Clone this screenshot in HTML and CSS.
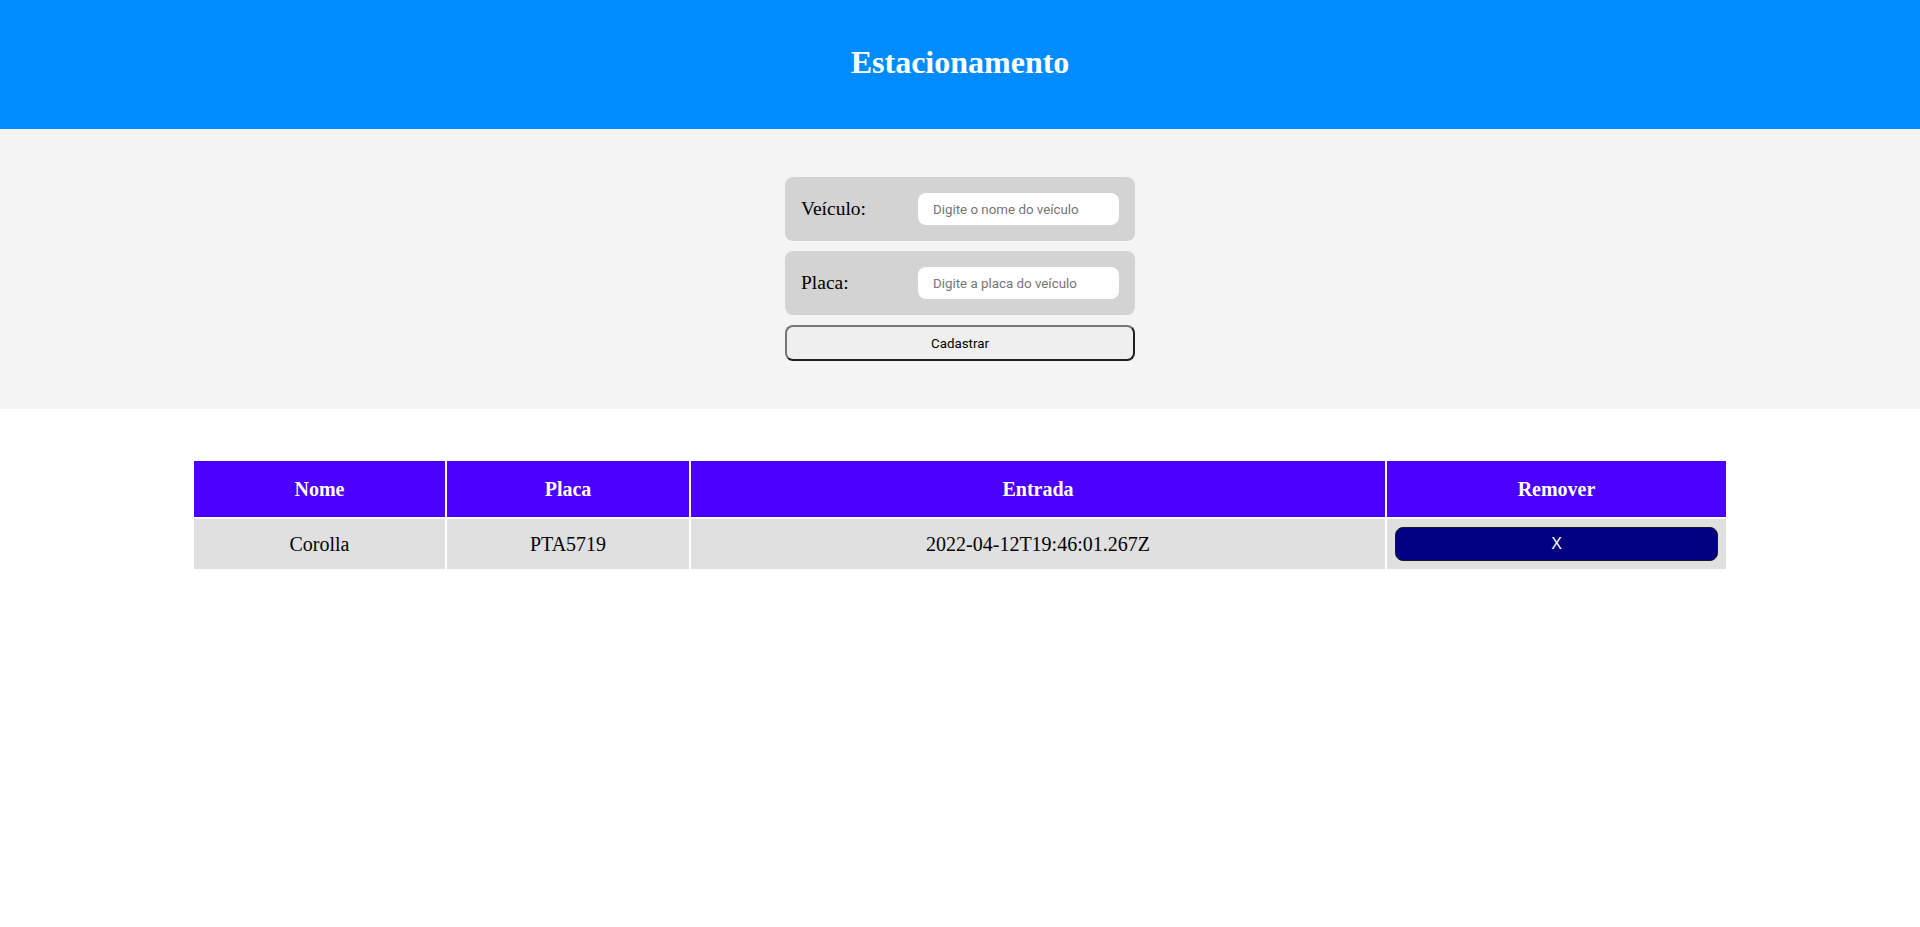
FILE: index.html
```html
<!DOCTYPE html>
<html lang="pt-BR">
<head>
<meta charset="utf-8">
<title>Estacionamento</title>
<link rel="stylesheet" href="styles.css">
</head>
<body>
<header class="topbar">
  <h1 class="title">Estacionamento</h1>
</header>
<section class="form-area">
  <form class="form">
    <div class="field">
      <label class="field-label" for="veiculo">Veículo:</label>
      <input class="field-input" id="veiculo" type="text" placeholder="Digite o nome do veículo">
    </div>
    <div class="field">
      <label class="field-label" for="placa">Placa:</label>
      <input class="field-input" id="placa" type="text" placeholder="Digite a placa do veículo">
    </div>
    <button class="submit" type="button">Cadastrar</button>
  </form>
</section>
<table class="garage">
  <colgroup>
    <col class="c-nome">
    <col class="c-placa">
    <col class="c-entrada">
    <col class="c-remover">
  </colgroup>
  <thead>
    <tr>
      <th>Nome</th>
      <th>Placa</th>
      <th>Entrada</th>
      <th>Remover</th>
    </tr>
  </thead>
  <tbody>
    <tr>
      <td>Corolla</td>
      <td>PTA5719</td>
      <td>2022-04-12T19:46:01.267Z</td>
      <td><button class="remove" type="button">X</button></td>
    </tr>
  </tbody>
</table>
</body>
</html>
```
FILE: styles.css
```css
html, body {
  margin: 0;
  padding: 0;
  background: #ffffff;
  font-family: "Liberation Serif", "Times New Roman", serif;
}

.topbar {
  height: 129px;
  background: #008cff;
  display: flex;
  align-items: center;
  justify-content: center;
}

.title {
  margin: 0 0 4px 0;
  color: #ffffff;
  font-size: 32px;
  font-weight: bold;
}

.form-area {
  background: #f4f4f4;
  padding: 48px 0;
  display: flex;
  justify-content: center;
}

.form {
  width: 350px;
  display: flex;
  flex-direction: column;
  gap: 10px;
}

.field {
  height: 64px;
  box-sizing: border-box;
  background: #d3d3d3;
  border-radius: 8px;
  padding: 16px;
  display: flex;
  align-items: center;
  justify-content: space-between;
}

.field-label {
  font-size: 19.5px;
  color: #000000;
}

.field-input {
  width: 201px;
  height: 32px;
  box-sizing: border-box;
  border: none;
  border-radius: 8px;
  background: #ffffff;
  padding: 0 15px;
  font-family: Roboto, "Liberation Sans", Arial, sans-serif;
  font-size: 13.333px;
  outline: none;
}

.field-input::placeholder {
  color: #757575;
}

.submit {
  height: 36px;
  box-sizing: border-box;
  background: #efefef;
  border: 2px solid;
  border-color: #767676 #1f1f1f #1f1f1f #767676;
  border-radius: 8px;
  font-family: Roboto, "Liberation Sans", Arial, sans-serif;
  font-size: 13.333px;
  color: #000000;
  padding: 0;
}

.garage {
  width: 1536px;
  margin: 50px auto 0 auto;
  border-spacing: 2px;
  table-layout: fixed;
  font-size: 20px;
  line-height: 24px;
}

.c-nome { width: 251px; }
.c-placa { width: 242px; }
.c-entrada { width: 694px; }
.c-remover { width: 339px; }

.garage th {
  background: #4b00ff;
  color: #ffffff;
  font-weight: bold;
  padding: 16px 0;
  text-align: center;
}

.garage td {
  background: #e0e0e0;
  color: #000000;
  padding: 8px 0;
  text-align: center;
}

.remove {
  width: 95%;
  height: 34px;
  box-sizing: border-box;
  background: #000080;
  color: #ffffff;
  border: 1px solid #1a1a1a;
  border-radius: 8px;
  font-family: "Liberation Sans", Arial, sans-serif;
  font-size: 16px;
  padding: 0;
  display: block;
  margin: 0 auto;
}
```
